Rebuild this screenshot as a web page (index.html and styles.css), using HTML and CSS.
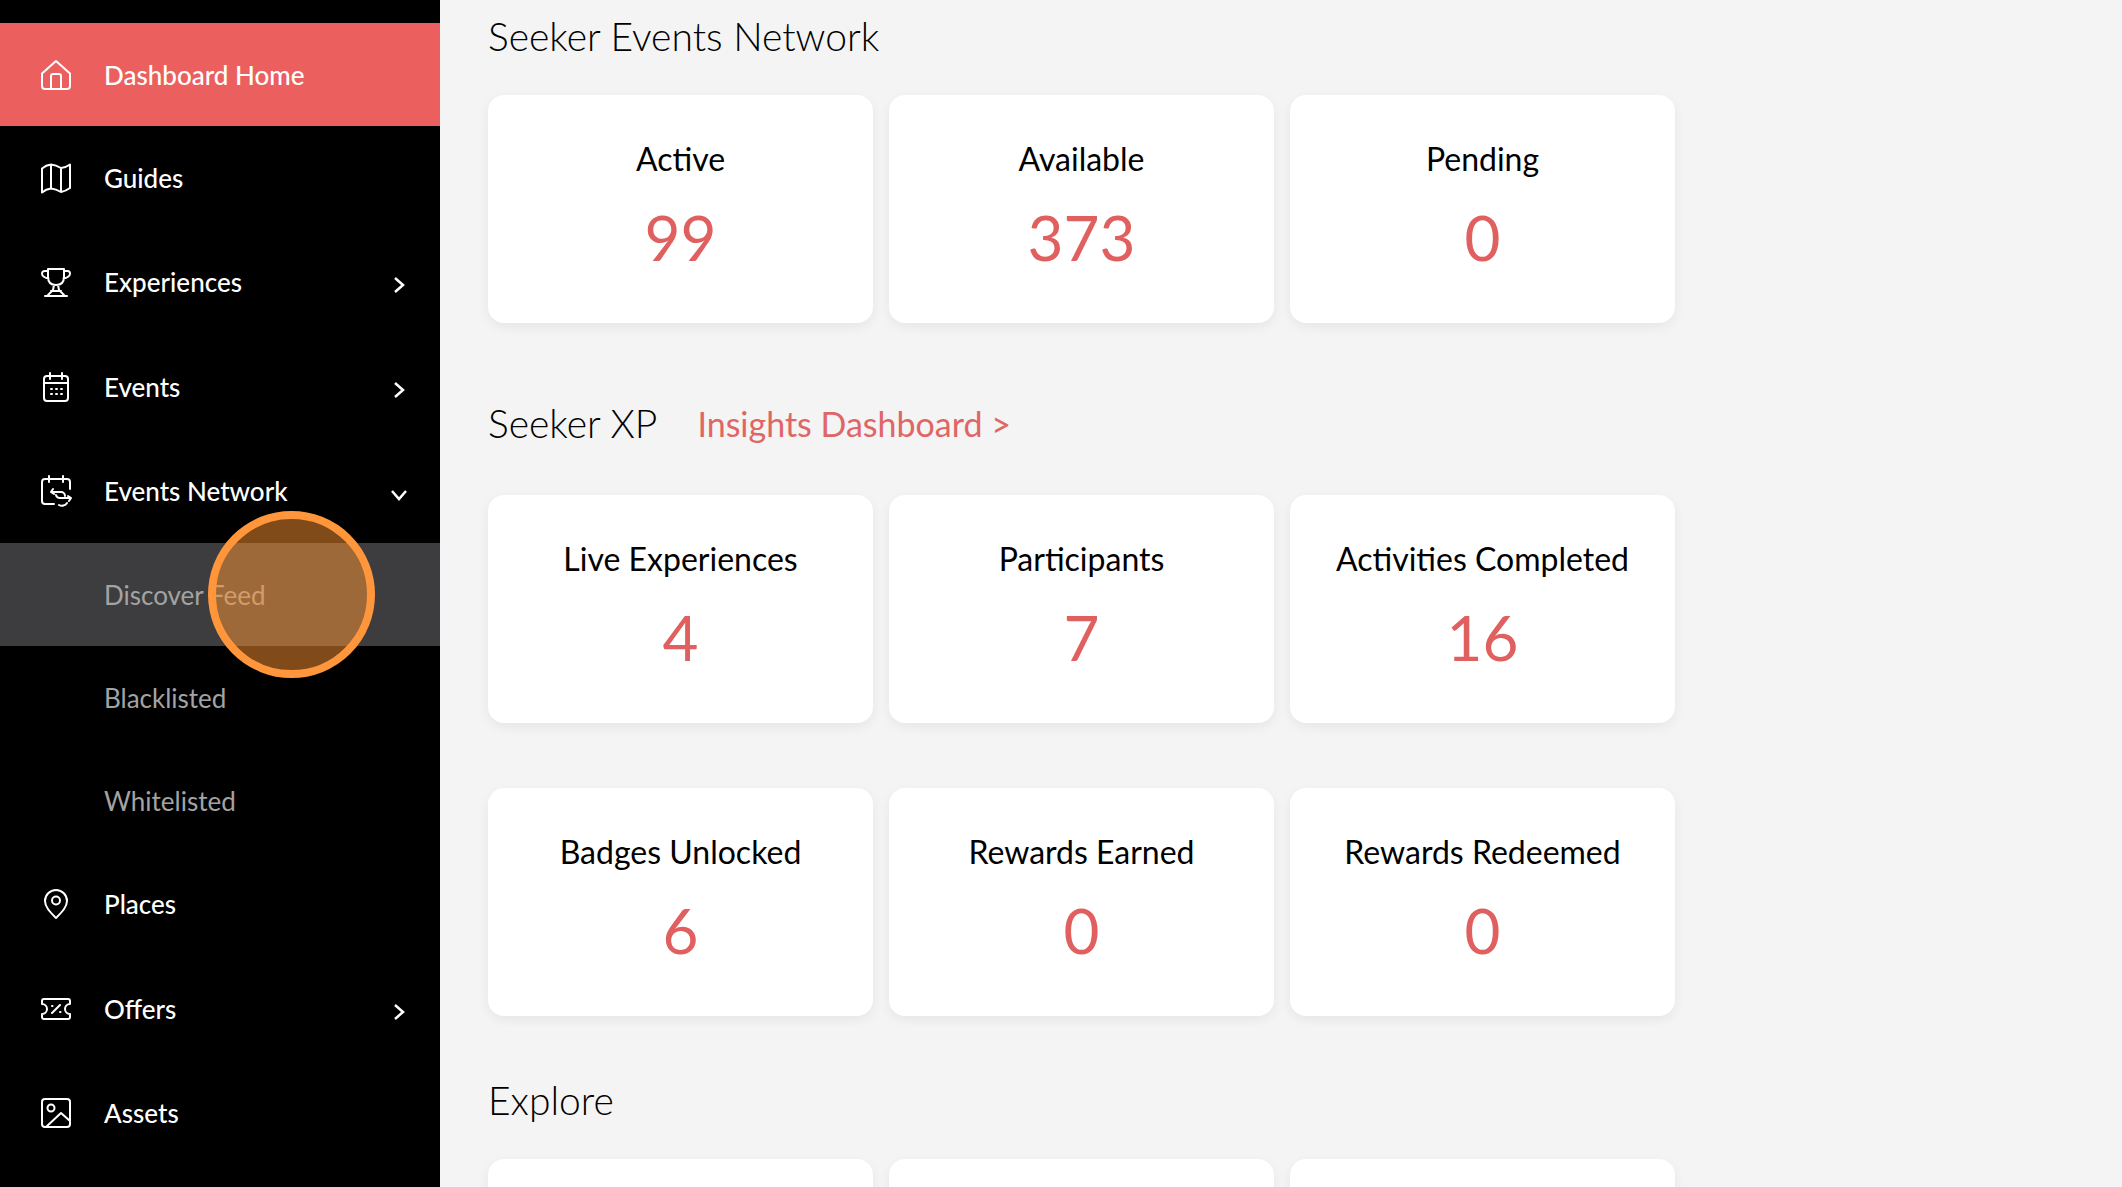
FILE: index.html
```html
<!DOCTYPE html>
<html lang="en">
<head>
    <meta charset="UTF-8">
    <meta name="viewport" content="width=device-width, initial-scale=1.0">
    <title>Dashboard</title>
    <link rel="stylesheet" href="styles.css">
</head>
<body>
    <aside class="sidebar">
        <a class="nav-item active">
            <svg class="nav-icon" viewBox="0 0 32 32"><path d="M2 14.5 16 2l14 12.5V27a3 3 0 0 1-3 3H5a3 3 0 0 1-3-3z"/><path d="M11 30V17a2 2 0 0 1 2-2h6a2 2 0 0 1 2 2v13"/></svg>
            <span>Dashboard Home</span>
        </a>
        <a class="nav-item">
            <svg class="nav-icon" viewBox="0 0 32 32"><path d="M2 6.5Q6 3 11 2.500V26.500Q6 27 2 30.500zM11 2.500Q16 3 21 6V30Q16 27 11 26.500zM21 6Q26 5.500 30 2.500V26Q26 29 21 30z"/></svg>
            <span>Guides</span>
        </a>
        <a class="nav-item">
            <svg class="nav-icon" viewBox="0 0 32 32"><path d="M8 3h16v8c0 5-3 8-8 8s-8-3-8-8zM8 5H4.500a2.500 2.500 0 0 0-2.500 2.500C2 10 5 12 8.500 12.500M24 5h3.500A2.500 2.500 0 0 1 30 7.500C30 10 27 12 23.500 12.500M14 19l-1 5-5 5M18 19l1 5 5 5M5 30h22M11 25h10"/></svg>
            <span>Experiences</span>
            <svg class="nav-arrow" viewBox="0 0 12 18"><path d="M2 2l8 7-8 7"/></svg>
        </a>
        <a class="nav-item">
            <svg class="nav-icon" viewBox="0 0 32 32"><rect x="4" y="5" width="24" height="25" rx="3"/><path d="M4 12h24M10 2v6M22 2v6M11 18h1M16 18h1M21 18h1M11 23h1M16 23h1M21 23h1"/></svg>
            <span>Events</span>
            <svg class="nav-arrow" viewBox="0 0 12 18"><path d="M2 2l8 7-8 7"/></svg>
        </a>
        <a class="nav-item">
            <svg class="nav-icon" viewBox="0 0 32 32"><path d="M14 29H5a3 3 0 0 1-3-3V7a3 3 0 0 1 3-3h22a3 3 0 0 1 3 3v7M9 1v6M23 1v6M13 14l-2 3 3 2M11.500 17H21a4 4 0 0 1 4 4M29 26l2-3-3-2M30 23H20a4 4 0 0 1-4-3M27 28a6 6 0 0 1-8 2"/></svg>
            <span>Events Network</span>
            <svg class="nav-arrow down" viewBox="0 0 18 12"><path d="M2 2l7 8 7-8"/></svg>
        </a>
        <a class="sub-item current">Discover Feed</a>
        <a class="sub-item">Blacklisted</a>
        <a class="sub-item">Whitelisted</a>
        <a class="nav-item">
            <svg class="nav-icon" viewBox="0 0 32 32"><path d="M16 30C10 24 5 19 5 13a11 11 0 0 1 22 0c0 6-5 11-11 17z"/><circle cx="16" cy="12.500" r="4"/></svg>
            <span>Places</span>
        </a>
        <a class="nav-item">
            <svg class="nav-icon" viewBox="0 0 32 32"><path d="M4 6h24a2 2 0 0 1 2 2v3a5 5 0 0 0 0 10v3a2 2 0 0 1-2 2H4a2 2 0 0 1-2-2v-3a5 5 0 0 0 0-10V8a2 2 0 0 1 2-2zM20 12l-8 8M12 13h.5M20 19h.5"/></svg>
            <span>Offers</span>
            <svg class="nav-arrow" viewBox="0 0 12 18"><path d="M2 2l8 7-8 7"/></svg>
        </a>
        <a class="nav-item">
            <svg class="nav-icon" viewBox="0 0 32 32"><rect x="2" y="2" width="28" height="28" rx="3"/><circle cx="11" cy="11" r="3.500"/><path d="M6 30l15-14 9 8"/></svg>
            <span>Assets</span>
        </a>
    </aside>

    <main class="content">
        <h2 class="section-title">Seeker Events Network</h2>
        <div class="card-grid">
            <div class="card"><div class="card-label">Active</div><div class="card-value">99</div></div>
            <div class="card"><div class="card-label">Available</div><div class="card-value">373</div></div>
            <div class="card"><div class="card-label">Pending</div><div class="card-value">0</div></div>
        </div>

        <div class="section-head">
            <h2 class="section-title">Seeker XP</h2>
            <a class="section-link">Insights Dashboard &gt;</a>
        </div>
        <div class="card-grid">
            <div class="card"><div class="card-label">Live Experiences</div><div class="card-value">4</div></div>
            <div class="card"><div class="card-label">Participants</div><div class="card-value">7</div></div>
            <div class="card"><div class="card-label">Activities Completed</div><div class="card-value">16</div></div>
        </div>
        <div class="card-grid second">
            <div class="card"><div class="card-label">Badges Unlocked</div><div class="card-value">6</div></div>
            <div class="card"><div class="card-label">Rewards Earned</div><div class="card-value">0</div></div>
            <div class="card"><div class="card-label">Rewards Redeemed</div><div class="card-value">0</div></div>
        </div>

        <h2 class="section-title explore">Explore</h2>
        <div class="card-grid">
            <div class="card"></div>
            <div class="card"></div>
            <div class="card"></div>
        </div>
    </main>

    <div class="click-marker"></div>
</body>
</html>
```

FILE: styles.css
```css
* {
    box-sizing: border-box;
}

html, body {
    height: 100%;
}

body {
    margin: 0;
    font-family: Lato, "Liberation Sans", sans-serif;
    background-color: #f4f4f4;
    color: black;
    display: flex;
    height: 1187px;
    overflow: hidden;
    position: relative;
}

.sidebar {
    width: 440px;
    flex-shrink: 0;
    background-color: black;
    padding-top: 23px;
    color: white;
}

.nav-item {
    display: flex;
    align-items: center;
    height: 104.300px;
    padding-left: 40px;
    padding-right: 35px;
    font-size: 26px;
    font-weight: 500;
}

.nav-item.active {
    background-color: #ec5f5f;
    height: 103px;
}

.nav-icon {
    width: 32px;
    height: 32px;
    margin-right: 32px;
    fill: none;
    stroke: white;
    stroke-width: 2;
    stroke-linecap: round;
    stroke-linejoin: round;
    flex-shrink: 0;
}

.nav-arrow {
    width: 12px;
    height: 18px;
    margin-left: auto;
    margin-top: 6px;
    fill: none;
    stroke: white;
    stroke-width: 2.500;
}

.nav-arrow.down {
    width: 18px;
    height: 12px;
    margin-right: -3px;
    margin-top: 8px;
}

.sub-item {
    display: flex;
    align-items: center;
    height: 103px;
    padding-left: 104px;
    font-size: 26px;
    color: #a3a3a3;
}

.sub-item.current {
    background-color: #3d3d3f;
}

.content {
    flex: 1;
    padding: 8px 0 0 48px;
}

.section-title {
    margin: 0;
    font-size: 39px;
    font-weight: 300;
    line-height: 56px;
}

.card-grid {
    display: grid;
    grid-template-columns: repeat(3, 385px);
    gap: 16px;
    margin-top: 31px;
}

.card-grid.second {
    margin-top: 65px;
}

.card {
    background-color: white;
    border-radius: 16px;
    height: 228px;
    box-shadow: 0 4px 12px rgba(0, 0, 0, 0.06);
    text-align: center;
    padding-top: 42px;
}

.card-label {
    font-size: 32px;
    line-height: 44px;
}

.card-value {
    font-size: 62px;
    line-height: 76px;
    margin-top: 18px;
    color: #e05f5f;
}

.section-head {
    display: flex;
    align-items: center;
    gap: 40px;
    margin-top: 72px;
}

.section-head + .card-grid {
    margin-top: 44px;
}

.section-link {
    font-size: 34px;
    color: #e06666;
}

.explore {
    margin-top: 56px;
}

.click-marker {
    position: absolute;
    left: 208px;
    top: 511px;
    width: 167px;
    height: 167px;
    border-radius: 50%;
    border: 8px solid #ff963c;
    background-color: rgba(255, 150, 50, 0.5);
}
```
